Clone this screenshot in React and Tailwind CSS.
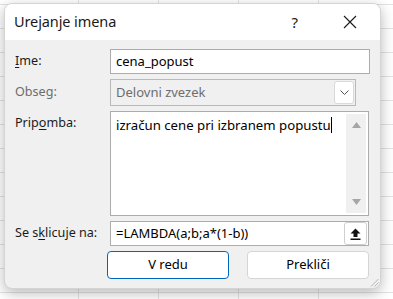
import React from 'react';

const font = { fontFamily: '"Noto Sans", "Open Sans", sans-serif' };

const Label = ({ children, muted }) => (
    <div className={`w-[95px] shrink-0 text-[12.6px] leading-none ${muted ? 'text-[#6d6d6d]' : 'text-[#1b1b1b]'}`}>{children}</div>
);

export default function App() {
    return (
        <div
            className="w-[393px] h-[299px] overflow-hidden bg-white bg-[linear-gradient(to_right,#e3e3e3_1px,transparent_1px),linear-gradient(to_bottom,#e3e3e3_1px,transparent_1px)] bg-size-[80px_24px] bg-position-[78px_4px] pt-[3px] pl-[4px]"
            style={font}
        >
            <div className="w-[377px] h-[286px] rounded-[8px] overflow-hidden bg-[#f0f0f0] border border-[#d4d4d4] shadow-[0_4px_14px_rgba(0,0,0,0.28)] flex flex-col relative">
                {/* title bar */}
                <div className="h-[36px] bg-white flex items-center pl-[9px] shrink-0">
                    <span className="text-[14.5px] text-[#1a1a1a] tracking-[-0.1px]">Urejanje imena</span>
                    <span className="ml-auto mr-[45px] text-[15px] text-[#1a1a1a]">?</span>
                    <svg width="14" height="14" viewBox="0 0 14 14" className="mr-[23px]">
                        <path d="M1 1 L13 13 M13 1 L1 13" stroke="#1a1a1a" strokeWidth="1.1" fill="none" />
                    </svg>
                </div>

                {/* body */}
                <div className="flex flex-col pl-[10px] pt-[9px]">
                    <div className="flex items-center h-[25px]">
                        <Label><span className="underline underline-offset-2">I</span>me:</Label>
                        <div className="w-[260px] h-[25px] bg-white border border-[#acacac] flex items-center pl-[5px] text-[13px] text-black">cena_popust</div>
                    </div>

                    <div className="flex items-center h-[27px] mt-[5px]">
                        <Label muted>Obseg:</Label>
                        <div className="w-[246px] h-[27px] bg-[#f0f0f0] border border-[#b9b9b9] flex items-center pl-[5px] pr-[1px] text-[13px] text-[#6d6d6d]">
                            <span>Delovni zvezek</span>
                            <div className="ml-auto w-[20px] h-[23px] bg-white border border-[#d9d9d9] rounded-[3px] flex items-center justify-center">
                                <svg width="9" height="5" viewBox="0 0 9 5">
                                    <path d="M0.5 0.5 L4.5 4.5 L8.5 0.5" stroke="#555" strokeWidth="1" fill="none" />
                                </svg>
                            </div>
                        </div>
                    </div>

                    <div className="flex items-start h-[105px] mt-[5px]">
                        <div className="pt-[6px]"><Label>Prip<span className="underline underline-offset-2">o</span>mba:</Label></div>
                        <div className="w-[259px] h-[105px] bg-white border border-[#acacac] flex p-[2px]">
                            <div className="flex-1 pl-[3px] pt-[2px] text-[13.2px] text-black leading-[18px]">
                                izračun cene pri izbranem popustu<span className="inline-block w-px h-[16px] bg-black align-[-3px]" />
                            </div>
                            <div className="w-[20px] h-full bg-[#f0f0f0] flex flex-col items-center justify-between py-[8px]">
                                <svg width="9" height="6" viewBox="0 0 9 6"><path d="M4.5 0 L9 6 L0 6 Z" fill="#a6a6a6" /></svg>
                                <svg width="9" height="6" viewBox="0 0 9 6"><path d="M0 0 L9 0 L4.5 6 Z" fill="#a6a6a6" /></svg>
                            </div>
                        </div>
                    </div>

                    <div className="flex items-center h-[25px] mt-[5px]">
                        <Label>Se s<span className="underline underline-offset-2">k</span>licuje na:</Label>
                        <div className="w-[259px] h-[25px] bg-white border border-[#acacac] flex items-center pl-[5px] pr-[1px] text-[13px] text-black">
                            <span>=LAMBDA(a;b;a*(1-b))</span>
                            <div className="ml-auto w-[23px] h-[23px] bg-white border border-[#cfcfcf] rounded-[3px] flex items-center justify-center">
                                <svg width="11" height="12" viewBox="0 0 11 12">
                                    <path d="M5.5 0.5 L10.5 5.5 L7.5 5.5 L7.5 9 L3.5 9 L3.5 5.5 L0.5 5.5 Z" fill="#111" />
                                    <rect x="0.5" y="10.5" width="10" height="1.5" fill="#111" />
                                </svg>
                            </div>
                        </div>
                    </div>

                    <div className="flex gap-[18px] mt-[5px] pl-[92px]">
                        <button className="w-[122px] h-[28px] bg-white border border-[#0067c0] rounded-[4px] text-[13px] text-black">V redu</button>
                        <button className="w-[122px] h-[28px] bg-white border border-[#d5d5d5] rounded-[4px] text-[13px] text-black">Prekliči</button>
                    </div>
                </div>

                {/* resize grip */}
                <svg width="9" height="9" viewBox="0 0 9 9" className="absolute right-[1px] bottom-[1px]">
                    <path d="M8.5 1 L1 8.5 M8.5 4.5 L4.5 8.5" stroke="#b5b5b5" strokeWidth="1" />
                </svg>
            </div>
        </div>
    );
}
